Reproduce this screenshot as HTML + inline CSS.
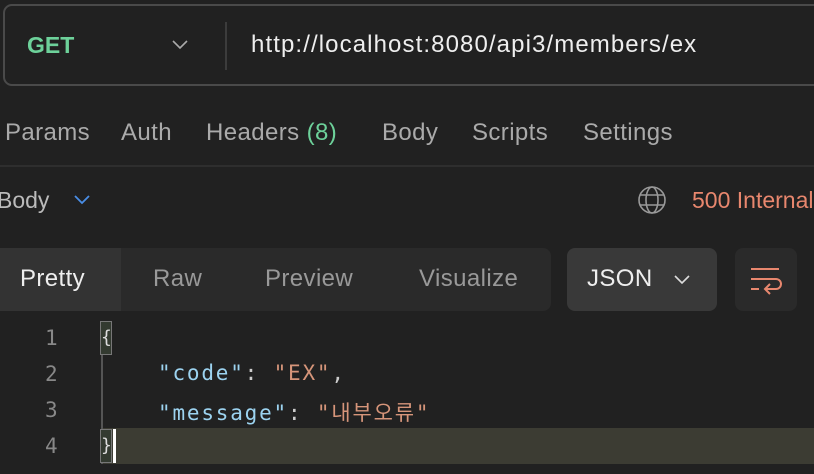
<!DOCTYPE html>
<html><head><meta charset="utf-8"><style>
body{margin:0;width:814px;height:474px;background:#212121;overflow:hidden;position:relative;font-family:"Liberation Sans","Noto Sans CJK KR",sans-serif;}
.a{position:absolute;white-space:nowrap;}
.t{font-size:24px;letter-spacing:0.4px;}
.mono{font-family:"DejaVu Sans Mono","Noto Sans CJK KR",monospace;font-size:21px;letter-spacing:1.8px;}
</style></head><body>
<div class="a" style="left:3px;top:4px;width:830px;height:82px;border:2px solid #4a4a4a;border-radius:9px;box-sizing:border-box"></div>
<div class="a" style="left:27px;top:32px;font-size:23px;color:#6dd19a;font-weight:bold">GET</div>
<svg class="a" style="left:171px;top:39px" width="18" height="12"><path d="M2 2 L9 9 L16 2" stroke="#aaa" stroke-width="1.6" fill="none"/></svg>
<div class="a" style="left:225px;top:22px;width:2px;height:48px;background:#3c3c3c"></div>
<div class="a t" style="left:251px;top:31px;color:#eee;letter-spacing:1.1px">http://localhost:8080/api3/members/ex</div>
<div class="a t" style="top:119px;left:5px;color:#aaa">Params</div>
<div class="a t" style="top:119px;left:121px;color:#aaa">Auth</div>
<div class="a t" style="top:119px;left:206px;color:#aaa">Headers <span style="color:#6dd19a">(8)</span></div>
<div class="a t" style="top:119px;left:382px;color:#aaa">Body</div>
<div class="a t" style="top:119px;left:472px;color:#aaa">Scripts</div>
<div class="a t" style="top:119px;left:583px;color:#aaa">Settings</div>
<div class="a" style="top:165px;left:0;width:814px;height:2px;background:#2e2e2e"></div>
<div class="a" style="top:187px;left:-3px;font-size:23px;color:#bbb">Body</div>
<svg class="a" style="left:73px;top:194px" width="18" height="12"><path d="M2 2 L9 9 L16 2" stroke="#4a8ee6" stroke-width="1.8" fill="none"/></svg>
<svg class="a" style="left:637px;top:185px" width="30" height="30"><circle cx="15" cy="15" r="13" stroke="#999" stroke-width="1.6" fill="none"/><ellipse cx="15" cy="15" rx="6" ry="13" stroke="#999" stroke-width="1.6" fill="none"/><path d="M3 10H27M3 20H27" stroke="#999" stroke-width="1.6"/></svg>
<div class="a" style="top:187px;left:692px;font-size:23px;color:#e8876e">500 Internal</div>
<div class="a" style="top:248px;left:0;width:551px;height:63px;background:#2a2a2a;border-radius:0 8px 8px 0"></div>
<div class="a" style="top:248px;left:0;width:121px;height:63px;background:#333"></div>
<div class="a t" style="top:265px;left:20px;color:#eee">Pretty</div>
<div class="a t" style="top:265px;left:153px;color:#999">Raw</div>
<div class="a t" style="top:265px;left:265px;color:#999">Preview</div>
<div class="a t" style="top:265px;left:419px;color:#999">Visualize</div>
<div class="a" style="top:248px;left:567px;width:150px;height:63px;background:#393939;border-radius:8px"></div>
<div class="a t" style="top:265px;left:587px;color:#eee">JSON</div>
<svg class="a" style="left:673px;top:274px" width="18" height="12"><path d="M2 2 L9 9 L16 2" stroke="#ddd" stroke-width="1.6" fill="none"/></svg>
<div class="a" style="top:248px;left:735px;width:62px;height:63px;background:#2a2a2a;border-radius:8px"></div>
<svg class="a" style="left:748px;top:265px" width="36" height="32"><path d="M3 4H31M3 14H28a5 5 0 0 1 0 10H18M22 19l-5 5 5 5M3 24H11" stroke="#e8876e" stroke-width="2" fill="none"/></svg>
<div class="a" style="top:428px;left:101px;width:713px;height:36px;background:#3c3c33"></div>
<div class="a" style="top:322px;left:101px;width:2px;height:142px;background:#555"></div>
<div class="a" style="top:321px;left:100px;width:12px;height:34px;border:1.5px solid #777;box-sizing:border-box;background:#333a30"></div>
<div class="a" style="top:429px;left:100px;width:12px;height:34px;border:1.5px solid #777;box-sizing:border-box;background:#333a30"></div>
<div class="a" style="top:429px;left:113px;width:3px;height:34px;background:#fff"></div>
<div class="a mono" style="top:326px;left:45px;color:#888">1</div>
<div class="a mono" style="top:362px;left:45px;color:#888">2</div>
<div class="a mono" style="top:398px;left:45px;color:#888">3</div>
<div class="a mono" style="top:434px;left:45px;color:#888">4</div>
<div class="a mono" style="top:327px;left:101px;color:#ddd;font-size:18px;letter-spacing:0">{</div>
<div class="a mono" style="top:435px;left:101px;color:#ddd;font-size:18px;letter-spacing:0">}</div>
<div class="a mono" style="top:361px;left:158px;color:#9cd3f0">"code"<span style="color:#ccc">: </span><span style="color:#d6957a">"EX"</span><span style="color:#ccc">,</span></div>
<div class="a mono" style="top:397px;left:158px;color:#9cd3f0">"message"<span style="color:#ccc">: </span><span style="color:#d6957a">"내부오류"</span></div>
</body></html>
